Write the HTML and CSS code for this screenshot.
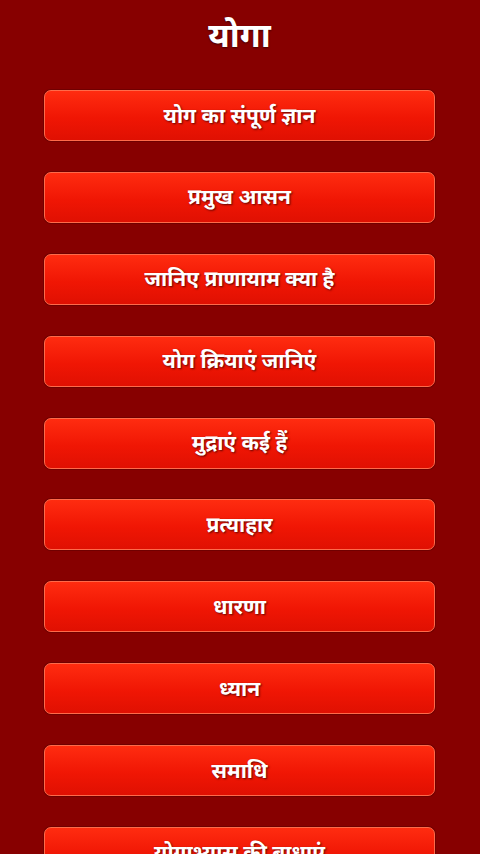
FILE: index.html
```html
<!DOCTYPE html>
<html lang="hi">
<head>
    <meta charset="UTF-8">
    <meta name="viewport" content="width=device-width, initial-scale=1.0">
    <title>योगा</title>
    <link rel="stylesheet" href="styles.css">
</head>
<body>
    <div class="yoga-screen">
        <h1 class="yoga-title">योगा</h1>
        <div class="menu-list">
            <button class="menu-btn">योग का संपूर्ण ज्ञान</button>
            <button class="menu-btn">प्रमुख आसन</button>
            <button class="menu-btn">जानिए प्राणायाम क्या है</button>
            <button class="menu-btn">योग क्रियाएं जानिएं</button>
            <button class="menu-btn">मुद्राएं कई हैं</button>
            <button class="menu-btn">प्रत्याहार</button>
            <button class="menu-btn">धारणा</button>
            <button class="menu-btn">ध्यान</button>
            <button class="menu-btn">समाधि</button>
            <button class="menu-btn">योगाभ्यास की बाधाएं</button>
        </div>
    </div>
</body>
</html>
```

FILE: styles.css
```css
html, body {
    margin: 0;
    padding: 0;
    height: 100%;
    overflow: hidden;
}

body {
    background-color: #870000;
    font-family: "Noto Sans", "Noto Sans Devanagari", "Lohit Devanagari", sans-serif;
    color: #fff;
}

.yoga-screen {
    padding: 13px 45px 0 44px;
}

.yoga-title {
    margin: 0;
    font-size: 34px;
    line-height: 42px;
    font-weight: bold;
    text-align: center;
    text-shadow: 0 1px 2px rgba(0, 0, 0, 0.5);
}

.menu-list {
    display: flex;
    flex-direction: column;
    gap: 30.9px;
    margin-top: 35px;
}

.menu-btn {
    height: 51px;
    width: 100%;
    padding: 0 0 2px;
    border: 1px solid #ff6a4a;
    border-radius: 7px;
    background: linear-gradient(#ff2c10, #f01604 55%, #e01002);
    box-shadow: 0 0 0 1px rgba(90, 0, 0, 0.5);
    color: #fff;
    font-family: inherit;
    font-size: 21px;
    font-weight: bold;
    text-shadow: 1px 1px 2px rgba(60, 0, 0, 0.8);
    cursor: pointer;
}
```
